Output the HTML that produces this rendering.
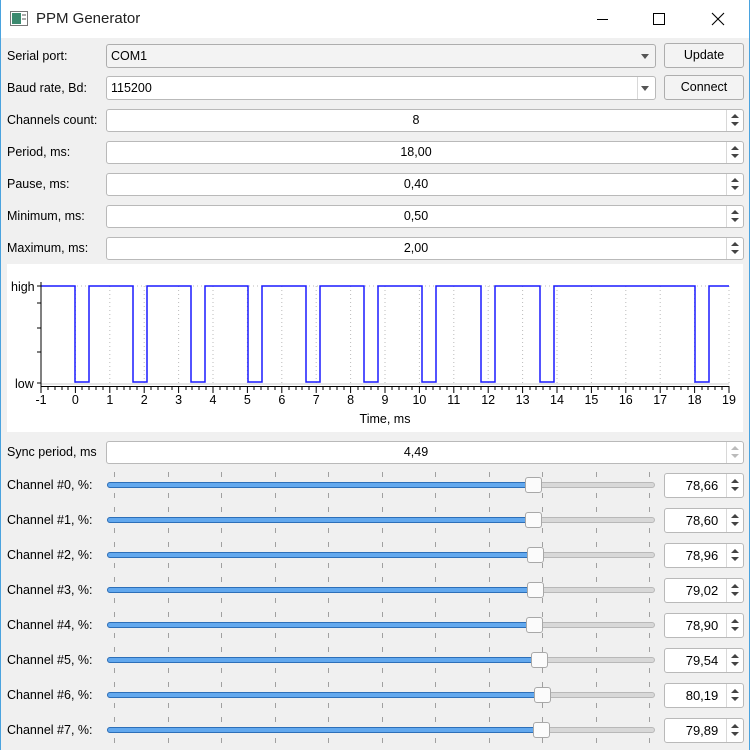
<!DOCTYPE html>
<html><head><meta charset="utf-8"><style>
*{box-sizing:border-box;margin:0;padding:0}
body{width:750px;height:750px;overflow:hidden;background:#f0f0f0;font-family:"Liberation Sans",Arial,sans-serif;font-size:12.5px;color:#000;position:relative}
.a{position:absolute}
#title{left:0;top:0;width:750px;height:38px;background:#fff}
#bl{left:0;top:0;width:1px;height:750px;background:#4aa3df}
#br{left:749px;top:0;width:1px;height:750px;background:#4aa3df}
.lbl{left:7px;height:22px;line-height:22px}
.box{background:#fff;border:1px solid #b9b9b9;border-radius:3px;height:23px}
.btn{background:#f3f3f3;border:1px solid #adadad;border-radius:3px;height:25px;text-align:center;line-height:23px}
.spin{left:106px;width:638px;height:23px;background:#fff;border:1px solid #b9b9b9;border-radius:3px;text-align:center;line-height:21px;padding-right:18px}
.arr{position:absolute;right:0;top:0;width:17px;height:21px;border-left:1px solid #d8d8d8}
.arr:before{content:"";position:absolute;left:4px;top:4px;border-left:4px solid transparent;border-right:4px solid transparent;border-bottom:4px solid #444}
.arr:after{content:"";position:absolute;left:4px;top:12px;border-left:4px solid transparent;border-right:4px solid transparent;border-top:4px solid #444}
.dis:before{border-bottom-color:#bbb}.dis:after{border-top-color:#bbb}
.val{left:664px;width:80px;height:25px;background:#fff;border:1px solid #b9b9b9;border-radius:3px;text-align:center;line-height:23px;font-size:13px;padding-right:4px}
.val .arr{height:23px}
.val .arr:before{top:5px}.val .arr:after{top:13px}
.groove{left:107px;width:548px;height:6px;background:#d8d8d8;border:1px solid #b8b8b8;border-radius:3px}
.fill{position:absolute;left:-1px;top:-1px;height:6px;background:#62a8ee;border:1px solid #2d6fb8;border-radius:3px}
.hdl{width:17px;height:16px;background:#fbfbfb;border:1px solid #a8a8a8;border-radius:3px}
.tk{width:1px;height:5px;background:#a0a0a0}
</style></head><body>
<div class="a" id="title"></div>
<div class="a" id="bl"></div><div class="a" id="br"></div>
<svg class="a" style="left:10px;top:11px" width="18" height="16"><rect x="0.5" y="0.5" width="17" height="14" fill="#fff" stroke="#777"/><rect x="2" y="2" width="9" height="11" fill="#3b8a6f"/><rect x="12" y="3" width="4" height="2" fill="#aaa"/><rect x="12" y="7" width="4" height="2" fill="#aaa"/></svg>
<div class="a" style="left:36px;top:10px;font-size:15px;color:#222">PPM Generator</div>
<div class="a" style="left:597px;top:19px;width:11px;height:1px;background:#000"></div>
<div class="a" style="left:653px;top:13px;width:12px;height:12px;border:1px solid #000"></div>
<svg class="a" style="left:711px;top:12px" width="14" height="14"><path d="M1 1L13 13M13 1L1 13" stroke="#000" stroke-width="1.1"/></svg>

<div class="a lbl" style="top:45px">Serial port:</div>
<div class="a box" style="left:106px;top:44px;width:550px;height:24px;background:#f3f3f3;border-color:#adadad"><span style="position:absolute;left:4px;top:4px">COM1</span><span style="position:absolute;right:6px;top:9px;border-left:4px solid transparent;border-right:4px solid transparent;border-top:5px solid #555"></span></div>
<div class="a btn" style="left:664px;top:43px;width:80px">Update</div>
<div class="a lbl" style="top:77px">Baud rate, Bd:</div>
<div class="a box" style="left:106px;top:76px;width:550px;height:24px"><span style="position:absolute;left:4px;top:4px">115200</span><span style="position:absolute;right:0;top:0;width:18px;height:22px;border-left:1px solid #d8d8d8"></span><span style="position:absolute;right:6px;top:9px;border-left:4px solid transparent;border-right:4px solid transparent;border-top:5px solid #555"></span></div>
<div class="a btn" style="left:664px;top:75px;width:80px">Connect</div>

<div class="a lbl" style="top:109px">Channels count:</div><div class="a spin" style="top:109px">8<div class="arr"></div></div>
<div class="a lbl" style="top:141px">Period, ms:</div><div class="a spin" style="top:141px">18,00<div class="arr"></div></div>
<div class="a lbl" style="top:173px">Pause, ms:</div><div class="a spin" style="top:173px">0,40<div class="arr"></div></div>
<div class="a lbl" style="top:205px">Minimum, ms:</div><div class="a spin" style="top:205px">0,50<div class="arr"></div></div>
<div class="a lbl" style="top:237px">Maximum, ms:</div><div class="a spin" style="top:237px">2,00<div class="arr"></div></div>

<svg class="a" style="left:7px;top:264px" width="736" height="168" font-family="Liberation Sans, sans-serif" font-size="12.5">
<rect width="736" height="168" fill="#fff"/>
<g transform="translate(-7,-264)">
<g stroke="#bbb" stroke-dasharray="1,3">
<line x1="41" y1="286" x2="729" y2="286"/>
<line x1="75.4" y1="286" x2="75.4" y2="384"/><line x1="109.8" y1="286" x2="109.8" y2="384"/><line x1="144.2" y1="286" x2="144.2" y2="384"/><line x1="178.6" y1="286" x2="178.6" y2="384"/><line x1="213" y1="286" x2="213" y2="384"/><line x1="247.4" y1="286" x2="247.4" y2="384"/><line x1="281.8" y1="286" x2="281.8" y2="384"/><line x1="316.2" y1="286" x2="316.2" y2="384"/><line x1="350.6" y1="286" x2="350.6" y2="384"/><line x1="385" y1="286" x2="385" y2="384"/><line x1="419.4" y1="286" x2="419.4" y2="384"/><line x1="453.8" y1="286" x2="453.8" y2="384"/><line x1="488.2" y1="286" x2="488.2" y2="384"/><line x1="522.6" y1="286" x2="522.6" y2="384"/><line x1="557" y1="286" x2="557" y2="384"/><line x1="591.4" y1="286" x2="591.4" y2="384"/><line x1="625.8" y1="286" x2="625.8" y2="384"/><line x1="660.2" y1="286" x2="660.2" y2="384"/><line x1="694.6" y1="286" x2="694.6" y2="384"/><line x1="729" y1="286" x2="729" y2="384"/>
</g>
<line x1="41" y1="384" x2="729" y2="384" stroke="#ccc"/>
<path d="M41 286H75V382H89V286H133V382H147V286H191V382H205V286H248V382H262V286H306V382H320V286H364V382H378V286H422V382H436V286H481V382H495V286H540V382H554V286H695V382H709V286H729" fill="none" stroke="#1a1aff" stroke-width="1.5"/>
<path d="M41 282V386M37 286H41M37 303H41M37 328H41M37 352H41M37 383H41M41 386.5H729" stroke="#000" stroke-width="1" fill="none"/>
<path d="M41 386V393M75.4 386V393M109.8 386V393M144.2 386V393M178.6 386V393M213 386V393M247.4 386V393M281.8 386V393M316.2 386V393M350.6 386V393M385 386V393M419.4 386V393M453.8 386V393M488.2 386V393M522.6 386V393M557 386V393M591.4 386V393M625.8 386V393M660.2 386V393M694.6 386V393M729 386V393" stroke="#000"/>
<path d="M48 386V390M55 386V390M62 386V390M68 386V390M82 386V390M89 386V390M96 386V390M103 386V390M117 386V390M124 386V390M130 386V390M137 386V390M151 386V390M158 386V390M165 386V390M172 386V390M186 386V390M192 386V390M199 386V390M206 386V390M220 386V390M227 386V390M234 386V390M240 386V390M254 386V390M261 386V390M268 386V390M275 386V390M289 386V390M296 386V390M302 386V390M309 386V390M323 386V390M330 386V390M337 386V390M344 386V390M358 386V390M364 386V390M371 386V390M378 386V390M392 386V390M399 386V390M406 386V390M412 386V390M426 386V390M433 386V390M440 386V390M447 386V390M461 386V390M468 386V390M474 386V390M481 386V390M495 386V390M502 386V390M509 386V390M516 386V390M530 386V390M536 386V390M543 386V390M550 386V390M564 386V390M571 386V390M578 386V390M584 386V390M598 386V390M605 386V390M612 386V390M619 386V390M633 386V390M640 386V390M646 386V390M653 386V390M667 386V390M674 386V390M681 386V390M688 386V390M702 386V390M708 386V390M715 386V390M722 386V390" stroke="#000"/>
<text x="11" y="291">high</text><text x="15" y="388">low</text>
<g text-anchor="middle"><text x="41" y="404">-1</text><text x="75.4" y="404">0</text><text x="109.8" y="404">1</text><text x="144.2" y="404">2</text><text x="178.6" y="404">3</text><text x="213" y="404">4</text><text x="247.4" y="404">5</text><text x="281.8" y="404">6</text><text x="316.2" y="404">7</text><text x="350.6" y="404">8</text><text x="385" y="404">9</text><text x="419.4" y="404">10</text><text x="453.8" y="404">11</text><text x="488.2" y="404">12</text><text x="522.6" y="404">13</text><text x="557" y="404">14</text><text x="591.4" y="404">15</text><text x="625.8" y="404">16</text><text x="660.2" y="404">17</text><text x="694.6" y="404">18</text><text x="729" y="404">19</text>
<text x="385" y="423">Time, ms</text></g>
</g></svg>

<div class="a lbl" style="top:441px">Sync period, ms</div><div class="a spin" style="top:441px">4,49<div class="arr dis"></div></div>

<script>
var vals=["78,66","78,60","78,96","79,02","78,90","79,54","80,19","79,89"];
var hx=[533,533,535,535,534,539,542,541];
var h="";
for(var i=0;i<8;i++){var c=485+i*35;
h+='<div class="a lbl" style="top:'+(c-11)+'px">Channel #'+i+', %:</div>';
for(var k=0;k<11;k++){var x=Math.round(114+k*53.5);
h+='<div class="a tk" style="left:'+x+'px;top:'+(c-13)+'px"></div><div class="a tk" style="left:'+x+'px;top:'+(c+8)+'px"></div>';}
h+='<div class="a groove" style="top:'+(c-3)+'px"><div class="fill" style="width:'+(hx[i]-107)+'px"></div></div>';
h+='<div class="a hdl" style="left:'+(hx[i]-8)+'px;top:'+(c-8)+'px"></div>';
h+='<div class="a val" style="top:'+(c-12)+'px">'+vals[i]+'<div class="arr"></div></div>';}
document.body.insertAdjacentHTML("beforeend",h);
</script>
</body></html>
